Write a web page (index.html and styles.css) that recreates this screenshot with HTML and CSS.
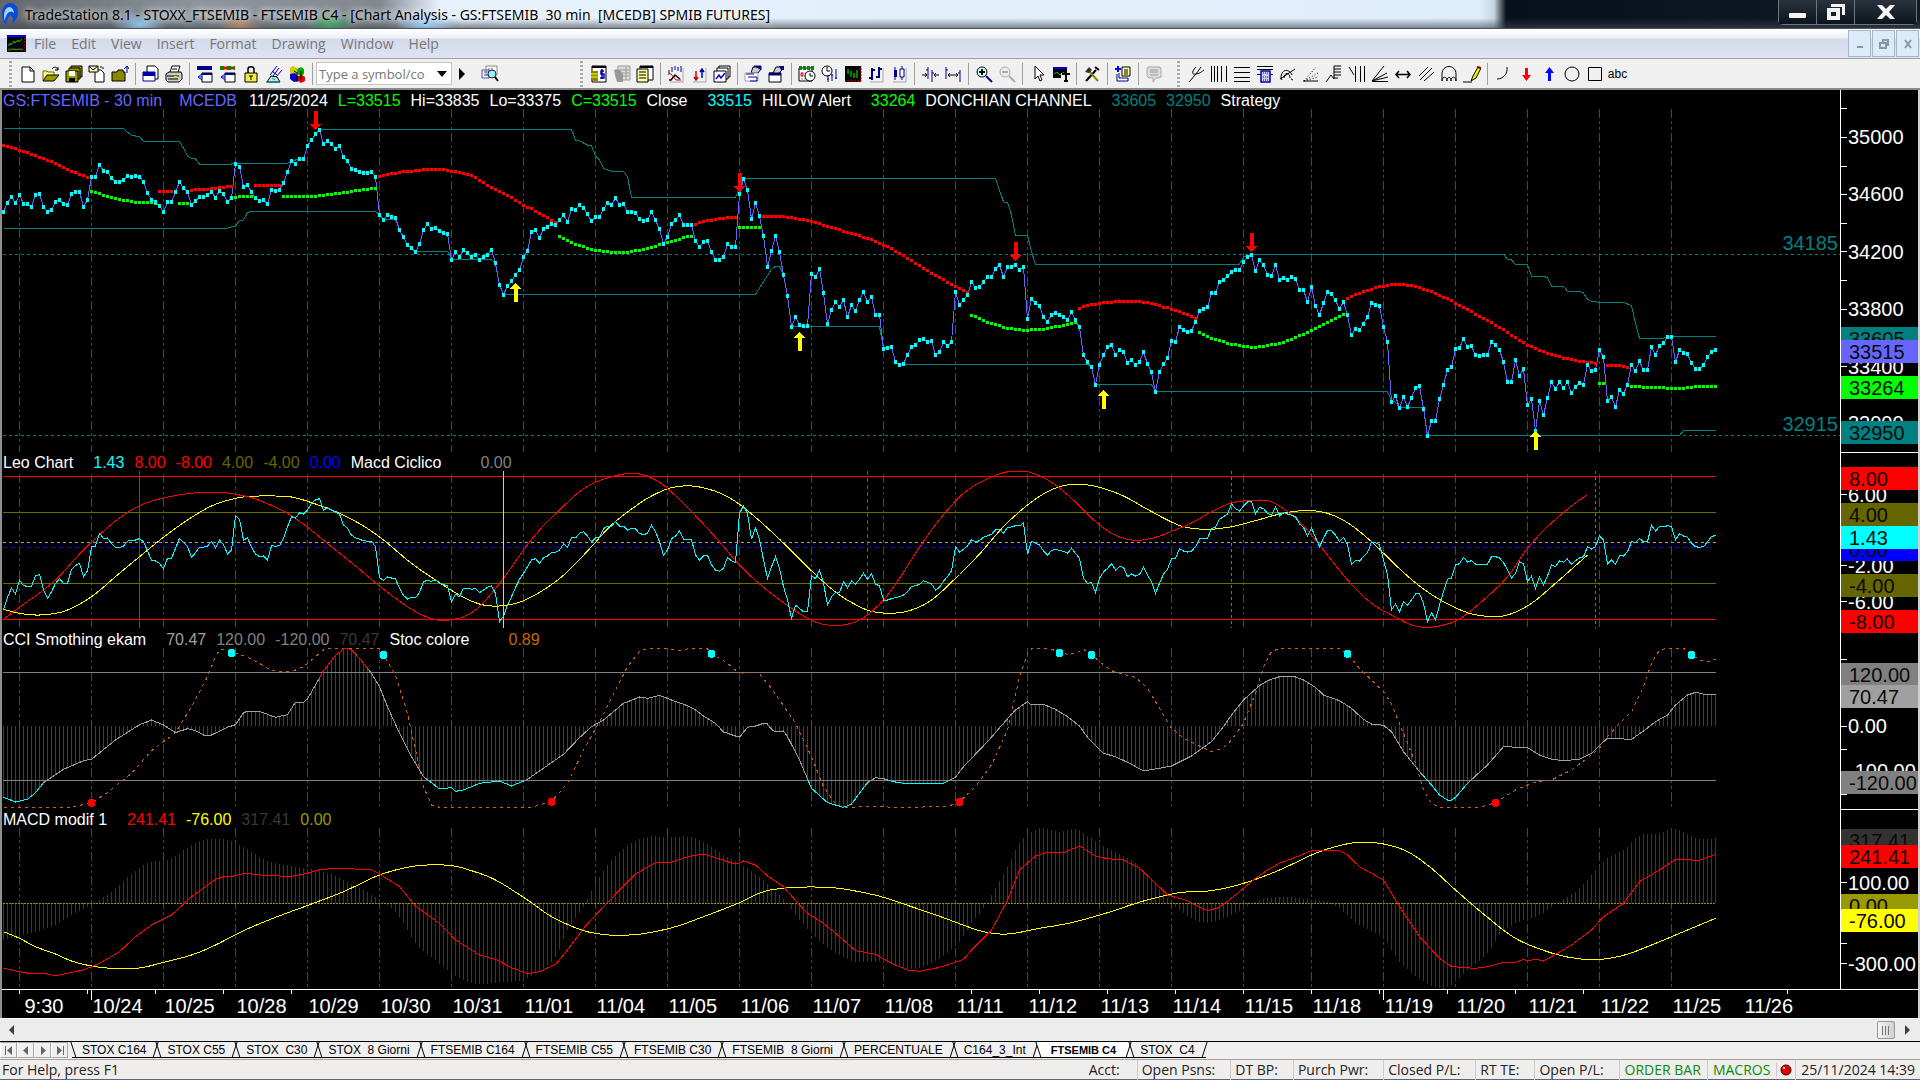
FILE: index.html
```html
<!DOCTYPE html>
<html lang="en">

<head>
    <meta charset="UTF-8">
    <meta name="viewport" content="width=device-width, initial-scale=1.0">
    <title>TradeStation 8.1 - STOXX_FTSEMIB</title>
    <link rel="stylesheet" href="styles.css">
</head>

<body>
    <div class="window">
        <!-- Title bar -->
        <header class="title-bar">
            <svg class="app-icon" viewBox="0 0 18 24">
                <path d="M9 1c5 0 8 4 8 9 0 6-3 9-6 12 1-4 1-7-1-9-3 1-4 5-5 10-3-3-4-7-4-11C1 6 4 1 9 1z" fill="#0a4bd8" />
                <path d="M8 5c3 0 5 3 5 6-2-2-4-2-6 0-2 2-3 5-3 8-2-5-1-13 4-14z" fill="#9fd4ff" />
            </svg>
            <h1 class="title-text">TradeStation 8.1 - STOXX_FTSEMIB - FTSEMIB C4 - [Chart Analysis - GS:FTSEMIB&nbsp; 30 min&nbsp; [MCEDB] SPMIB FUTURES]</h1>
            <div class="window-buttons">
                <button class="win-btn" aria-label="Minimize"><svg width="20" height="16"><rect x="1" y="9" width="17" height="5" rx="1" /></svg></button>
                <button class="win-btn" aria-label="Restore"><svg width="20" height="16"><path d="M5 0h14v11h-3V3H5zM1 4h13v12H1zm4 4v4h5V8z" fill-rule="evenodd" /></svg></button>
                <button class="win-btn win-close" aria-label="Close"><svg width="20" height="16"><path d="M1 1h5l4 4 4-4h5l-6 7 6 7h-5l-4-4-4 4H1l6-7z" /></svg></button>
            </div>
        </header>

        <!-- Menu -->
        <nav class="menu-bar">
            <svg class="doc-icon" viewBox="0 0 19 17">
                <rect width="19" height="17" fill="#000" />
                <rect width="19" height="2" fill="#00f" />
                <path d="M1 11l2-3 1 2 3-4 1 2 3-3 1 2 3-3M1 15h3l2-1 3 1 3-1 4 1" fill="none" stroke="#0c0" />
                <path d="M17.500 3v13M1 13.500h16" stroke="#800" stroke-dasharray="2 1" />
            </svg>
            <button class="menu-item">File</button>
            <button class="menu-item">Edit</button>
            <button class="menu-item">View</button>
            <button class="menu-item">Insert</button>
            <button class="menu-item">Format</button>
            <button class="menu-item">Drawing</button>
            <button class="menu-item">Window</button>
            <button class="menu-item">Help</button>
            <div class="mdi-buttons">
                <button class="mdi-btn" aria-label="Minimize chart"><svg width="10" height="10"><path d="M2 8h6" /></svg></button>
                <button class="mdi-btn" aria-label="Restore chart"><svg width="10" height="10"><path d="M4 3V1h5v5H7M1 4h6v5H1z" /></svg></button>
                <button class="mdi-btn" aria-label="Close chart"><svg width="10" height="10"><path d="M2 1l6 8M8 1L2 9" /></svg></button>
            </div>
        </nav>

        <!-- Toolbar -->
        <div class="toolbar" role="toolbar">
            <div class="tool-group file-tools">
                <span class="grip"></span>
                <button class="tool" aria-label="New"><svg viewBox="0 0 18 18"><path d="M3 2h8l4 4v11H3zM11 2v4h4" fill="#fff" stroke="#000" /></svg></button>
                <button class="tool" aria-label="Open"><svg viewBox="0 0 18 18"><path d="M1 16V6h4l1 1h6v3" fill="#ffff80" stroke="#660" /><path d="M1 16l4-6h12l-5 6z" fill="#990" stroke="#000" /><path d="M10 4c2-3 5-2 6 1m0-3v3h-3" fill="none" stroke="#000" /></svg></button>
                <button class="tool" aria-label="Save all"><svg viewBox="0 0 18 18"><path d="M6 1h11v11H6z" fill="#990" stroke="#000" /><path d="M4 3h11v11H4z" fill="#990" stroke="#000" /><path d="M1 6h12v11H1z" fill="#990" stroke="#000" /><path d="M4 6h6v5H4z" fill="#fff" /><path d="M4 13h6v4H4z" fill="#000" /></svg></button>
                <button class="tool" aria-label="Mail document"><svg viewBox="0 0 18 18"><path d="M7 5h6l3 3v9H7z" fill="#fff" stroke="#000" /><path d="M1 1h9v6H1zM1 1l4 4 5-4" fill="#ffffa0" stroke="#000" /><path d="M12 2h3v3" fill="none" stroke="#000" stroke-dasharray="2 1" /></svg></button>
                <button class="tool" aria-label="Close folder"><svg viewBox="0 0 18 18"><path d="M1 16V7h5l1-2h5v2h2v9z" fill="#880" stroke="#000" /><path d="M16 8V2m-3 2l3-3 2 3" fill="none" stroke="#008" /></svg></button>
                <span class="sep"></span>
                <button class="tool" aria-label="Print preview"><svg viewBox="0 0 18 18"><path d="M5 1h8l3 3v10H5z" fill="#fff" stroke="#000" /><path d="M1 7h12v9H1z" fill="#fff" stroke="#008" /><path d="M1 7h12v4H1z" fill="#00a" /></svg></button>
                <button class="tool" aria-label="Print"><svg viewBox="0 0 18 18"><path d="M5 7l2-6h8l-2 6" fill="#fff" stroke="#000" /><path d="M1 9l3-2h12l1 2v5l-3 3H3l-2-2z" fill="#ccc" stroke="#000" /><path d="M2 11h12M3 14h10M7 4h5" stroke="#000" /><path d="M9 12h3" stroke="#dd0" stroke-width="2" /></svg></button>
                <span class="sep"></span>
                <button class="tool" aria-label="Save desktop"><svg viewBox="0 0 18 18"><path d="M1 2h15M1 4h15" stroke="#008" stroke-width="2" /><path d="M6 8h10v9H6z" fill="#fff" stroke="#000" /><path d="M6 8h10v2H6z" fill="#008" /><path d="M6 12H3M6 9l-4 3 4 3" fill="none" stroke="#00f" /></svg></button>
                <button class="tool" aria-label="Open desktop"><svg viewBox="0 0 18 18"><path d="M1 3h15" stroke="#080" stroke-width="4" stroke-dasharray="4 3" /><path d="M5 3h3m4 0h3" stroke="#f00" stroke-width="3" /><path d="M6 8h10v9H6z" fill="#fff" stroke="#000" /><path d="M6 8h10v2H6z" fill="#008" /><path d="M6 12H3M6 9l-4 3 4 3" fill="none" stroke="#00f" /></svg></button>
                <button class="tool" aria-label="Lock"><svg viewBox="0 0 18 18"><path d="M6 8V4c0-3 6-3 6 0v4" fill="none" stroke="#000" stroke-width="1.500" /><path d="M3 8h12v9H3z" fill="#ee4" stroke="#000" /><path d="M7 11h4M9 11v4" stroke="#000" /></svg></button>
                <button class="tool" aria-label="Data manager"><svg viewBox="0 0 18 18"><path d="M5 10l7-9M8 11l6-8M11 12l6-7M7 6l5 4" stroke="#00a" /><path d="M2 17l4-6 6 1 3 5z" fill="#bee" stroke="#000" /><path d="M1 17h14M7 13l3 2" stroke="#088" /></svg></button>
                <button class="tool" aria-label="Components"><svg viewBox="0 0 18 18"><path d="M2 3l3-2 4 2v5l-3 2-4-2z" fill="#cc0" /><path d="M9 4l4-2 3 2v5l-3 2-4-2z" fill="#0a0" /><path d="M2 9l5-1 3 3v5l-4 1-4-3z" fill="#00c" /><path d="M10 11l4-1 3 2v4l-4 2-3-2z" fill="#d00" /><path d="M6 6l3 2v9M13 6v9" fill="none" stroke="#000" /></svg></button>
                <span class="sep"></span>
                <div class="symbol-box">
                    <input type="text" aria-label="Symbol or command" placeholder="Type a symbol/co">
                    <button class="drop" aria-label="Recent commands"><svg viewBox="0 0 10 6"><path d="M0 0h10L5 6z" /></svg></button>
                </div>
                <button class="tool go" aria-label="Run command"><svg viewBox="0 0 18 18"><path d="M6 3l6 6-6 6z" /></svg></button>
                <button class="tool" aria-label="Symbol lookup"><svg viewBox="0 0 18 18"><path d="M5 1h11v9H5z" fill="#fff" stroke="#888" /><path d="M1 5h7v8H1zM3 7h10M3 10h4M8 3v2m3-2v4" fill="none" stroke="#55a" /><circle cx="11" cy="9" r="4" fill="#9ef" stroke="#222" /><path d="M14 12l3 4" stroke="#000" stroke-width="2" /></svg></button>
            </div>

            <div class="tool-group chart-tools">
                <span class="grip"></span>
                <button class="tool" aria-label="Symbol"><svg viewBox="0 0 18 18"><path d="M2 1h14v16H2z" fill="#fff" stroke="#000" /><path d="M2 2h14" stroke="#000" stroke-width="2" /><path d="M1 6h7v10H1z" fill="#880" /><path d="M1 9h7M1 12h7" stroke="#ff0" /><path d="M14 6h-3v3h3v4h-4M12 4v10" fill="none" stroke="#00a" stroke-width="1.500" /></svg></button>
                <button class="tool" aria-label="Account"><svg viewBox="0 0 18 18"><path d="M5 1h12v14H5z" fill="#ddd" stroke="#999" /><path d="M1 5l5-1 4 5v8H4L2 10z" fill="#999" /><path d="M7 5h9M8 8h8M10 11h6M13 2v13" stroke="#999" /></svg></button>
                <button class="tool" aria-label="Properties"><svg viewBox="0 0 18 18"><path d="M4 1h13v14H4z" fill="#fff" stroke="#000" /><path d="M4 2h13" stroke="#000" stroke-width="2" /><path d="M1 4h11v13H1z" fill="#ffffa0" stroke="#000" /><path d="M3 7h7M3 10h7M3 13h7" stroke="#000" /></svg></button>
                <span class="sep"></span>
                <button class="tool" aria-label="Insert analysis technique"><svg viewBox="0 0 18 18"><path d="M16 3v14H3" fill="none" stroke="#aaa" /><path d="M2 5v4m3-7v5m3-6v4m3-3v4m3-5v6" stroke="#00a" /><path d="M1 9h3l5 6h5" fill="none" stroke="#d00" /><path d="M2 15h2l4-5 5 4" fill="none" stroke="#000" stroke-width="1.500" /></svg></button>
                <button class="tool" aria-label="Insert strategy"><svg viewBox="0 0 18 18"><path d="M16 3v14H3" fill="none" stroke="#aaa" /><path d="M6 6v9m-2-3l2 3 2-3" fill="none" stroke="#c00" stroke-width="1.500" /><path d="M12 13V4m-2 3l2-3 2 3" fill="none" stroke="#00a" stroke-width="1.500" /></svg></button>
                <button class="tool" aria-label="Show charts"><svg viewBox="0 0 18 18"><path d="M6 1h11v11H6z" fill="#fff" stroke="#000" /><path d="M4 3h11v11H4z" fill="#fff" stroke="#000" /><path d="M1 6h12v11H1z" fill="#fff" stroke="#000" /><path d="M3 14l3-4 2 3 4-5" fill="none" stroke="#00c" stroke-width="1.500" /></svg></button>
                <span class="sep"></span>
                <button class="tool" aria-label="Format window"><svg viewBox="0 0 18 18"><path d="M7 8l2-6h5l3 2-3 4z" fill="#ccc" stroke="#000" /><path d="M10 1h7v4" fill="#008" stroke="#008" /><path d="M1 8h13v8H1z" fill="#fff" stroke="#aaa" /><path d="M2 9h8M4 12h9v4H6" fill="none" stroke="#00a" /></svg></button>
                <button class="tool" aria-label="Format symbol"><svg viewBox="0 0 18 18"><path d="M2 8h12v9H2z" fill="#fff" stroke="#000" /><path d="M2 9h12" stroke="#008" stroke-width="3" /><path d="M6 8l3-6h5l2 2-4 4z" fill="#ccc" stroke="#000" /><path d="M12 1h5v4h-3z" fill="#008" /></svg></button>
                <span class="sep"></span>
                <button class="tool" aria-label="Calendar"><svg viewBox="0 0 18 18"><path d="M1 3h13v13H1z" fill="#fff" stroke="#000" /><path d="M1 3h15" stroke="#080" stroke-width="4" stroke-dasharray="3 1" /><path d="M3 8h10M3 11h6M3 14h5" stroke="#888" stroke-dasharray="2 1" /><circle cx="12" cy="11" r="5" fill="#fff" stroke="#000" /><path d="M12 8v3h3" fill="none" stroke="#000" /><path d="M3 8h2v3H3z" fill="none" stroke="#d00" /></svg></button>
                <button class="tool" aria-label="Bar interval"><svg viewBox="0 0 18 18"><circle cx="6" cy="6" r="5" fill="#fff" stroke="#000" /><path d="M6 2v4h3" fill="none" stroke="#000" /><path d="M7 10v7m4-8v7m4-12v10m-9 0h2m2-4h2m2 3h2" stroke="#00a" /></svg></button>
                <button class="tool" aria-label="Bar chart"><svg viewBox="0 0 18 18"><path d="M1 1h16v16H1z" fill="#000" /><path d="M1 16h16V1" fill="none" stroke="#c00" stroke-dasharray="2 1" /><path d="M4 4v5m3-3v6m3-4v5m3-8v8" stroke="#0f0" /></svg></button>
                <button class="tool" aria-label="OHLC bars"><svg viewBox="0 0 18 18"><path d="M16 3v14H3" fill="none" stroke="#aaa" /><path d="M5 3v12m7-13v11M2 13h3m0-8h3m1 7h3m0-8h3" stroke="#008" stroke-width="2" /></svg></button>
                <button class="tool" aria-label="Candlesticks"><svg viewBox="0 0 18 18"><path d="M16 3v14H3" fill="none" stroke="#aaa" /><path d="M5 2v13m7-14v14" stroke="#008" /><path d="M4 5h3v7H4z" fill="#008" /><path d="M10 4h4v8h-4z" fill="#fff" stroke="#008" /></svg></button>
                <span class="sep"></span>
                <button class="tool" aria-label="Decrease spacing"><svg viewBox="0 0 18 18"><path d="M7 2v12m4-9v12M5 5h2m4 3h2" stroke="#008" /><path d="M1 10h5m-2-2l2 2-2 2m14-2h-5m2-2l-2 2 2 2" fill="none" stroke="#000" /></svg></button>
                <button class="tool" aria-label="Increase spacing"><svg viewBox="0 0 18 18"><path d="M2 2v12M16 5v12M2 5h2m10 3h2" stroke="#008" /><path d="M4 10h10m-8-2l-2 2 2 2m6-4l2 2-2 2" fill="none" stroke="#000" /></svg></button>
                <span class="sep"></span>
                <button class="tool" aria-label="Zoom in"><svg viewBox="0 0 18 18"><circle cx="7" cy="7" r="5" fill="#cff" stroke="#000" /><path d="M7 4v6M4 7h6" stroke="#000" stroke-width="2" /><path d="M11 11l6 6" stroke="#008" stroke-width="2" /></svg></button>
                <button class="tool" aria-label="Zoom out"><svg viewBox="0 0 18 18"><circle cx="7" cy="7" r="5" fill="#eee" stroke="#aaa" /><path d="M4 7h6" stroke="#aaa" stroke-width="2" /><path d="M11 11l6 6" stroke="#aaa" stroke-width="2" /></svg></button>
                <span class="sep"></span>
                <button class="tool" aria-label="Pointer"><svg viewBox="0 0 18 18"><path d="M6 1v13l3-3 2 5 2-1-2-5h4z" fill="#fff" stroke="#000" /></svg></button>
                <button class="tool" aria-label="Data tip"><svg viewBox="0 0 18 18"><path d="M1 2h14v11H1z" fill="#000" /><path d="M1 2h14v2H1z" fill="#00c" /><path d="M2 9l3-2 3 3 4-3" fill="none" stroke="#0c0" /><path d="M9 8h9v9H9z" fill="#f0f0f0" /><path d="M10 9h8M14 9v8M12 16h4" stroke="#000" stroke-width="2" /></svg></button>
                <span class="sep"></span>
                <button class="tool" aria-label="Customize"><svg viewBox="0 0 18 18"><path d="M3 16L13 5M12 2l4 3" stroke="#000" stroke-width="2" /><path d="M6 6l9 10" stroke="#880" stroke-width="2" /><path d="M2 7l4-5 3 3-3 3z" fill="#333" /></svg></button>
                <span class="sep"></span>
                <button class="tool" aria-label="Add to workspace"><svg viewBox="0 0 18 18"><path d="M4 1v6M1 4h6" stroke="#00f" stroke-width="2" /><path d="M8 2h8v9H8z" fill="#ffffa0" stroke="#000" /><path d="M10 5h4m-4 2h4m-4 2h4" stroke="#000" /><path d="M5 8v5h9v3H3V9" fill="#fff" stroke="#008" /></svg></button>
                <span class="sep"></span>
                <button class="tool" aria-label="Comment"><svg viewBox="0 0 18 18"><path d="M3 2h12l1 2v8l-3 1h-2l-3 4v-4H4l-2-2V4z" fill="#ddd" stroke="#aaa" /><path d="M5 5h8M5 7h8M5 10h8" stroke="#999" /></svg></button>
            </div>

            <div class="tool-group draw-tools">
                <span class="grip"></span>
                <button class="tool" aria-label="Pitchfork"><svg viewBox="0 0 18 18"><path d="M2 17l7-8M9 2c-4 4-5 8 0 7s5-2 8-4M9 9l5-7" fill="none" stroke="#000" /></svg></button>
                <button class="tool" aria-label="Time cycles"><svg viewBox="0 0 18 18"><path d="M1.500 1v16m3-16v16m3-16v16m4-16v16m5-16v16" stroke="#000" /></svg></button>
                <button class="tool" aria-label="Parallel levels"><svg viewBox="0 0 18 18"><path d="M1 2.500h16M1 7.500h16M1 12.500h16M1 16.500h16" stroke="#000" /></svg></button>
                <button class="tool" aria-label="Price calculator"><svg viewBox="0 0 18 18"><path d="M1 1.500h16M1 4.500h16M1 9.500h16" stroke="#000" /><path d="M5 6h9v11H5z" fill="#cce" stroke="#00a" stroke-width="1.500" /><path d="M7 8h5M7 12h5M7 15h5" stroke="#00a" stroke-dasharray="1 1" /></svg></button>
                <button class="tool" aria-label="Speed arcs"><svg viewBox="0 0 18 18"><path d="M1 14L16 4M2 13C2 4 10 3 13 10M5 13c0-6 6-6 6 0M2 13l1 2m9-1l2 1" fill="none" stroke="#000" /></svg></button>
                <button class="tool" aria-label="Fan lines"><svg viewBox="0 0 18 18"><path d="M1 16h15" stroke="#000" /><path d="M2 16L14 2M2 16l14-8M2 16l14-4" stroke="#000" stroke-dasharray="1 2" /></svg></button>
                <button class="tool" aria-label="Retracement levels"><svg viewBox="0 0 18 18"><path d="M1 17l5-7 3 4V1h7M9 4h7M9 7h7M9 10h7M9 13h4" fill="none" stroke="#000" /></svg></button>
                <button class="tool" aria-label="Time zones"><svg viewBox="0 0 18 18"><path d="M1 2l5 8M7.500 1v16M12.500 1v16M16.500 1v16" fill="none" stroke="#000" /></svg></button>
                <button class="tool" aria-label="Gann fan"><svg viewBox="0 0 18 18"><path d="M1 16.500h16M1 16L13 1M1 16l15-8M1 16l16-4" stroke="#000" /></svg></button>
                <button class="tool" aria-label="Horizontal line"><svg viewBox="0 0 18 18"><path d="M2 9.500h14M5 6L2 9.500 5 13m8-7l3 3.500-3 3.500" fill="none" stroke="#000" stroke-width="1.500" /></svg></button>
                <button class="tool" aria-label="Parallel lines"><svg viewBox="0 0 18 18"><path d="M2 11l9-9M3 15L15 3M7 16l10-9" stroke="#000" /></svg></button>
                <button class="tool" aria-label="Cycle arcs"><svg viewBox="0 0 18 18"><path d="M2 16V9c0-10 14-10 14 0v7M2 16c0-5 5-5 5 0 0-5 4-5 4 0 0-5 5-5 5 0" fill="none" stroke="#000" /></svg></button>
                <button class="tool" aria-label="Pencil"><svg viewBox="0 0 18 18"><path d="M0 17h9" stroke="#000" /><path d="M8 16l2-5 5-9 3 1-5 10z" fill="#ee0" stroke="#000" /><path d="M14 2l4 1" stroke="#800" stroke-width="2" /></svg></button>
                <span class="sep"></span>
                <button class="tool" aria-label="Arc"><svg viewBox="0 0 18 18"><path d="M3 14c6 0 11-5 10-12" fill="none" stroke="#000" /></svg></button>
                <button class="tool" aria-label="Down arrow"><svg viewBox="0 0 18 18"><path d="M8 3h3v7h3l-4.500 6L5 10h3z" fill="#f00" /></svg></button>
                <button class="tool" aria-label="Up arrow"><svg viewBox="0 0 18 18"><path d="M8 16h3V8h3L9.500 2 5 8h3z" fill="#00f" /></svg></button>
                <button class="tool" aria-label="Ellipse"><svg viewBox="0 0 18 18"><circle cx="9" cy="9" r="7" fill="none" stroke="#000" /></svg></button>
                <button class="tool" aria-label="Rectangle"><svg viewBox="0 0 18 18"><path d="M2.500 2.500h13v13h-13z" fill="none" stroke="#000" /></svg></button>
                <button class="tool text-tool" aria-label="Text">abc</button>
            </div>
        </div>

        <!-- Charts -->
        <main class="charts">
            <section class="panel price-panel">
                <div class="plot">
                    <div class="legend">
                        <span class="c-violet symbol">GS:FTSEMIB - 30 min</span><span class="c-violet source">MCEDB</span>
                        <span>11/25/2024</span><span class="c-green">L=33515</span><span>Hi=33835</span><span>Lo=33375</span>
                        <span class="c-green">C=33515</span><span class="study">Close</span><span class="c-cyan">33515</span>
                        <span class="study">HILOW Alert</span><span class="c-green">33264</span><span class="study">DONCHIAN CHANNEL</span>
                        <span class="c-teal">33605</span><span class="c-teal">32950</span><span>Strategy</span>
                    </div>
                    <svg class="canvas" id="price"></svg>
                </div>
                <svg class="scale" id="priceScale"></svg>
            </section>

            <section class="panel leo-panel">
                <div class="plot">
                    <div class="legend">
                        <span class="study">Leo Chart</span><span class="c-cyan">1.43</span><span class="c-red">8.00</span>
                        <span class="c-red">-8.00</span><span class="c-olive">4.00</span><span class="c-olive">-4.00</span>
                        <span class="c-blue">0.00</span><span class="study last">Macd Ciclico</span><span class="c-gray">0.00</span>
                    </div>
                    <svg class="canvas" id="leo"></svg>
                </div>
                <svg class="scale" id="leoScale"></svg>
            </section>

            <section class="panel cci-panel">
                <div class="plot">
                    <div class="legend">
                        <span class="study">CCI Smothing ekam</span><span class="c-silver">70.47</span><span class="c-gray">120.00</span>
                        <span class="c-gray">-120.00</span><span class="c-dark">70.47</span><span class="study last">Stoc colore</span>
                        <span class="c-orange">0.89</span>
                    </div>
                    <svg class="canvas" id="cci"></svg>
                </div>
                <svg class="scale" id="cciScale"></svg>
            </section>

            <section class="panel macd-panel">
                <div class="plot">
                    <div class="legend">
                        <span class="study">MACD modif 1</span><span class="c-red">241.41</span><span class="c-yellow">-76.00</span>
                        <span class="c-dark">317.41</span><span class="c-mustard">0.00</span>
                    </div>
                    <svg class="canvas" id="macd"></svg>
                </div>
                <svg class="scale" id="macdScale"></svg>
            </section>

            <svg class="time-axis" id="timeAxis"></svg>
        </main>

        <!-- Scroll bar -->
        <div class="scroll-bar">
            <button class="scroll-arrow" aria-label="Scroll left"><svg width="6" height="10"><path d="M6 0v10L1 5z" /></svg></button>
            <span class="scroll-track"></span>
            <button class="scroll-thumb" aria-label="Scroll position"></button>
            <button class="scroll-arrow" aria-label="Scroll right"><svg width="6" height="10"><path d="M0 0v10l5-5z" /></svg></button>
        </div>

        <!-- Workspaces -->
        <nav class="tabs">
            <div class="tab-nav">
                <button aria-label="First"><svg width="10" height="9"><path d="M1 0h1v9H1zM8 0v9L3 4.500z" /></svg></button>
                <button aria-label="Previous"><svg width="10" height="9"><path d="M7 0v9L2 4.500z" /></svg></button>
                <button aria-label="Next"><svg width="10" height="9"><path d="M3 0v9l5-4.500z" /></svg></button>
                <button aria-label="Last"><svg width="10" height="9"><path d="M8 0h1v9H8zM2 0v9l5-4.500z" /></svg></button>
            </div>
            <button class="tab">STOX C164</button>
            <button class="tab">STOX C55</button>
            <button class="tab">STOX  C30</button>
            <button class="tab">STOX  8 Giorni</button>
            <button class="tab">FTSEMIB C164</button>
            <button class="tab">FTSEMIB C55</button>
            <button class="tab">FTSEMIB C30</button>
            <button class="tab">FTSEMIB  8 Giorni</button>
            <button class="tab">PERCENTUALE</button>
            <button class="tab">C164_3_Int</button>
            <button class="tab active">FTSEMIB C4</button>
            <button class="tab">STOX  C4</button>
        </nav>

        <!-- Status bar -->
        <footer class="status-bar">
            <span class="status-help">For Help, press F1</span>
            <span class="cell">Acct:</span>
            <span class="cell">Open Psns:</span>
            <span class="cell">DT BP:</span>
            <span class="cell">Purch Pwr:</span>
            <span class="cell">Closed P/L:</span>
            <span class="cell">RT TE:</span>
            <span class="cell">Open P/L:</span>
            <span class="cell on">ORDER BAR</span>
            <span class="cell on">MACROS</span>
            <span class="cell lamp"><svg width="12" height="14"><circle cx="6" cy="7" r="5" fill="#d00" stroke="#400" /><circle cx="4" cy="5" r="1" fill="#fff" /></svg></span>
            <span class="cell">25/11/2024 14:39</span>
        </footer>
    </div>

    <script src="chart.js"></script>
</body>

</html>
```
FILE: styles.css
```css
* {
    margin: 0;
    padding: 0;
    box-sizing: border-box;
}

body {
    background: #f0f0f0;
    font-family: "Liberation Sans", Arial, sans-serif;
    overflow: hidden;
}

button {
    border: none;
    background: none;
    font: inherit;
    color: inherit;
}

.window {
    display: flex;
    flex-direction: column;
    min-height: 100vh;
}

/* title bar */
.title-bar {
    display: flex;
    align-items: center;
    height: 29px;
    padding-left: 1px;
    border-bottom: 1px solid #50545a;
    background:
        radial-gradient(ellipse 28px 12px at 140px 24px, #8fc4ee, transparent),
        radial-gradient(ellipse 24px 10px at 240px 25px, #b08060, transparent),
        radial-gradient(ellipse 26px 12px at 330px 24px, #3fa060, transparent),
        radial-gradient(ellipse 30px 12px at 425px 24px, #8fc8f4, transparent),
        linear-gradient(to bottom, transparent 18px, rgba(60, 70, 80, 0.6) 28px),
        linear-gradient(to right, #63676c 0, #8e959d 200px, #83888f 380px, #c3ccd6 418px, #e6f1fb 440px, #dfeefb 1480px, #c5d6e2 1494px, #08111b 1506px, #101a24 100%);
}

.app-icon {
    width: 18px;
    height: 24px;
}

.title-text {
    flex: 1;
    margin-left: 6px;
    font: 14px "Noto Sans", sans-serif;
    color: #000;
    text-shadow: 0 0 6px #fff, 0 0 8px rgba(255, 255, 255, 0.6);
    white-space: nowrap;
}

.window-buttons {
    display: flex;
    align-self: flex-start;
    margin-right: 3px;
    border: 1px solid #6c7680;
    border-top: none;
    border-radius: 0 0 5px 5px;
}

.win-btn {
    display: flex;
    align-items: center;
    justify-content: center;
    width: 38px;
    height: 24px;
    border-right: 1px solid #6c7680;
    background: linear-gradient(#2a333d, #0c141d);
}

.win-btn svg {
    fill: #f4f4f4;
}

.win-close {
    width: 61px;
    border-right: none;
}

/* menu */
.menu-bar {
    display: flex;
    align-items: center;
    gap: 1px;
    height: 29px;
    padding-left: 7px;
    background: linear-gradient(#fff, #eef0f8 9px, #d4daeb 10px, #dfe3f3);
    font: 14px "Open Sans", sans-serif;
    color: #777;
}

.doc-icon {
    width: 19px;
    height: 17px;
}

.menu-item {
    padding: 0 7px;
}

.mdi-buttons {
    display: flex;
    gap: 1px;
    margin-left: auto;
    margin-right: 1px;
}

.mdi-btn {
    width: 23px;
    height: 27px;
    border: 1px solid #a9b6c8;
    background: #dcebf9;
}

.mdi-btn svg {
    fill: none;
    stroke: #8a97a8;
    stroke-width: 2;
}

/* toolbar */
.toolbar {
    display: flex;
    height: 32px;
    border-top: 1px solid #a0a0a0;
    border-bottom: 2px solid #8a8a8a;
    background: #f0f0f0;
}

.tool-group {
    display: flex;
    align-items: center;
    padding-left: 9px;
}

.file-tools {
    flex: 0 0 571px;
}

.chart-tools {
    flex: 0 0 597px;
}

.grip {
    width: 3px;
    height: 26px;
    margin-right: 4px;
    background: repeating-linear-gradient(#aaa 0 2px, transparent 2px 4px);
}

.tool {
    display: flex;
    align-items: center;
    justify-content: center;
    flex: 0 0 23px;
    height: 24px;
}

.tool svg {
    width: 18px;
    height: 18px;
}

.sep {
    flex: 0 0 8px;
    height: 22px;
    background: linear-gradient(#a0a0a0, #a0a0a0) center / 1px 100% no-repeat;
}

.symbol-box {
    display: flex;
    align-items: center;
    width: 136px;
    height: 23px;
    border: 1px solid #c4c4c4;
    background: #fff;
}

.symbol-box input {
    flex: 1;
    min-width: 0;
    padding-left: 2px;
    border: none;
    background: none;
    font: 13px "Open Sans", sans-serif;
}

.symbol-box input::placeholder {
    color: #777;
}

.drop {
    width: 19px;
    line-height: 0;
}

.drop svg {
    width: 10px;
    height: 6px;
}

.go {
    flex-basis: 20px;
    margin-right: 6px;
}

.text-tool {
    font-size: 12px;
}

/* charts */
.charts {
    border-left: 2px solid #909090;
    border-right: 2px solid #d0d0d0;
    background: #000;
    color: #fff;
}

.panel {
    display: grid;
    grid-template-columns: 1fr 78px;
}

.plot {
    min-width: 0;
}

.legend {
    display: flex;
    gap: 10px;
    height: 20px;
    padding-left: 1px;
    font-size: 16px;
    line-height: 22px;
    white-space: nowrap;
}

.symbol {
    margin-right: 7px;
}

.source {
    margin-right: 2px;
}

.study {
    margin-right: 10px;
}

.study.last {
    margin-right: 29px;
}

.canvas,
.scale,
.time-axis {
    display: block;
    width: 100%;
    overflow: visible;
    shape-rendering: crispEdges;
}

.scale {
    height: 100%;
    border-left: 1px solid #fff;
}

.panel + .panel .scale {
    border-top: 1px solid #fff;
}

/* the lowest tag hangs over into the next panel */
.leo-panel .scale {
    position: relative;
    z-index: 1;
}

.price-panel .canvas {
    height: 342px;
}

.leo-panel .canvas {
    height: 157px;
}

.cci-panel .canvas,
.macd-panel .canvas {
    height: 160px;
}

.time-axis {
    height: 29px;
    border-top: 1px solid #fff;
}

.axis-text {
    font-size: 20px;
    fill: #fff;
}

.axis-text.dark {
    fill: #0a0a0a;
}

.axis-text.teal {
    fill: #008080;
}

.line {
    fill: none;
    stroke-width: 1;
}

.grid-line {
    stroke: #464646;
    stroke-dasharray: 9 3 3 3 3 3;
}

.c-violet { color: #6666ff; }
.c-green { color: #00ff00; }
.c-cyan { color: #00ffff; }
.c-teal { color: #008080; }
.c-red { color: #ff0000; }
.c-olive { color: #666600; }
.c-mustard { color: #999900; }
.c-blue { color: #0000ff; }
.c-gray { color: #808080; }
.c-silver { color: #a0a0a0; }
.c-dark { color: #383838; }
.c-orange { color: #cc6600; }
.c-yellow { color: #ffff00; }

/* scroll bar */
.scroll-bar {
    display: flex;
    align-items: center;
    height: 23px;
    padding: 0 4px 0 2px;
    border-top: 1px solid #fff;
    background: #ececec;
}

.scroll-arrow {
    width: 17px;
    fill: #404040;
    line-height: 0;
}

.scroll-track {
    flex: 1;
}

.scroll-thumb {
    width: 18px;
    height: 18px;
    margin-right: 4px;
    border: 1px solid #999;
    border-radius: 2px;
    background: repeating-linear-gradient(to right, #777 0 1px, transparent 1px 3px) center / 9px 9px no-repeat, linear-gradient(to right, #f4f4f4, #d0d0d0);
}

/* workspace tabs */
.tabs {
    display: flex;
    height: 18px;
    border-top: 1px solid #000;
    background: #f0f0f0;
    font-size: 12px;
    color: #000;
}

.tab-nav {
    display: flex;
    margin-right: 4px;
}

.tab-nav button {
    width: 17px;
    height: 16px;
    border: 1px solid #a8a8a8;
    border-left-color: #fff;
    line-height: 0;
    fill: #666;
}

.tab {
    position: relative;
    height: 16px;
    padding: 0 11px 0 10px;
    border-bottom: 1px solid #000;
    line-height: 16px;
    white-space: pre;
}

.tab::before,
.tab::after {
    content: "";
    position: absolute;
    top: 0;
    width: 1px;
    height: 16px;
    background: #000;
}

.tab::before {
    left: 1px;
    transform: skewX(18deg);
}

.tab::after {
    right: 1px;
    transform: skewX(-18deg);
}

.tab.active {
    padding: 0 14px;
    background: #fff;
    font-weight: bold;
    font-size: 11px;
}

/* status bar */
.status-bar {
    display: flex;
    align-items: center;
    flex: 1;
    max-height: 21px;
    border-top: 1px solid #a0a0a0;
    border-bottom: 1px solid #5a6478;
    background: #f0eded;
    font: 14px/20px "Open Sans", sans-serif;
    color: #222;
}

.status-help {
    flex: 1;
    padding-left: 2px;
}

.cell {
    padding: 0 15px 0 4px;
    border-left: 1px solid #cfcccc;
    white-space: nowrap;
}

.status-help + .cell {
    border-left: none;
    padding-right: 17px;
}

.cell.on {
    padding: 0 6px 0 5px;
    color: #0a8a0a;
}

.cell.lamp {
    padding: 0 3px;
    line-height: 0;
}

.cell:last-child {
    padding: 0 5px;
}
```
FILE: chart.js
```js
const NS = 'http://www.w3.org/2000/svg';
const BARS = 429;

// close of every 30 minute bar, in thirds of a pixel from the top of the panel
const close = [
    306,278,261,279,254,282,282,291,254,252,291,306,300,275,269,282,285,251,246,245,
    291,270,201,201,164,183,186,204,216,216,210,197,200,197,200,215,250,269,276,288,
    306,276,276,246,215,234,246,285,273,261,261,256,245,264,242,252,276,264,161,170,
    231,225,246,264,272,269,282,240,243,240,219,185,153,162,147,147,107,90,72,60,
    101,92,101,117,107,140,153,177,180,186,188,188,185,201,315,330,315,320,324,360,
    381,405,414,426,402,360,342,357,354,363,369,372,450,426,441,419,428,441,434,450,
    441,435,419,459,525,555,528,513,495,480,440,423,366,360,384,357,351,342,345,330,
    314,336,296,300,285,294,312,333,321,321,297,279,285,263,285,281,306,306,309,327,
    332,330,306,330,357,402,381,342,330,315,345,345,345,393,411,396,393,426,450,450,
    441,402,411,411,252,207,240,327,279,318,378,471,423,378,426,495,558,651,621,645,
    648,648,491,501,477,549,642,600,576,591,570,621,585,603,570,546,576,561,615,615,
    717,714,711,756,765,762,735,711,705,690,687,696,693,735,726,696,708,696,546,585,
    570,555,516,534,531,516,501,501,477,465,501,471,471,465,480,471,627,567,579,588,
    621,636,615,609,615,621,630,606,630,651,735,756,771,825,765,735,711,705,735,720,
    726,759,750,765,756,726,762,786,846,786,762,744,692,696,651,660,666,663,636,603,
    597,591,549,549,516,510,498,486,480,480,456,441,435,483,450,465,495,498,465,510,
    504,510,501,507,540,540,576,531,588,615,579,546,552,570,597,576,615,675,657,660,
    642,621,579,585,588,651,696,876,858,894,861,891,864,834,828,897,978,933,933,867,
    825,780,771,717,714,687,711,708,735,738,735,735,696,705,720,756,816,816,750,798,
    777,885,867,962,873,915,864,816,837,816,834,816,849,831,819,825,765,783,780,720,
    741,873,861,891,840,852,825,765,783,753,780,780,711,735,708,699,681,681,756,720,
    729,732,759,777,777,765,741,726,720
];

// the leo oscillator, one value a bar
const leo = [
    480,442,414,432,391,407,409,409,378,373,420,445,425,400,386,400,400,358,347,340,
    380,362,290,288,250,265,264,281,293,293,288,274,270,270,266,275,303,330,333,340,
    356,325,325,295,265,278,289,322,308,292,292,288,274,293,270,284,312,300,197,208,
    270,264,292,312,320,318,330,287,289,287,265,230,200,204,188,192,180,160,150,146,
    180,174,180,187,192,225,235,256,263,268,272,274,274,290,383,391,381,384,387,415,
    436,447,442,443,428,395,391,394,390,400,403,408,457,433,440,414,414,418,415,428,
    420,412,408,430,515,498,465,440,413,388,370,350,330,326,340,323,318,308,307,300,
    282,292,263,264,250,245,258,276,264,262,236,228,228,215,228,228,240,235,237,250,
    254,250,226,245,275,316,300,266,258,243,268,270,269,315,331,318,316,345,360,364,
    355,322,332,338,190,167,190,268,234,268,330,385,350,320,355,410,450,505,466,475,
    486,485,378,386,360,400,465,440,428,428,395,414,393,402,388,370,388,371,402,408,
    450,450,446,443,440,435,425,410,407,403,392,397,402,420,412,393,380,362,290,306,
    298,288,269,276,272,262,257,253,240,238,250,232,231,227,228,218,313,274,280,285,
    303,316,301,298,301,304,310,295,310,325,385,400,398,427,385,366,355,341,360,350,
    352,380,372,378,373,352,376,395,430,400,372,358,327,325,296,303,306,303,290,267,
    265,265,235,232,208,200,192,162,176,183,168,156,154,192,172,176,190,196,170,198,
    187,192,196,200,222,232,258,234,262,290,265,242,242,255,275,262,283,342,332,333,
    320,308,276,278,284,330,375,480,462,485,455,466,450,432,431,460,515,488,510,465,
    425,388,384,345,341,322,336,332,342,345,343,343,320,320,324,338,360,384,370,335,
    342,395,378,415,380,405,378,345,350,332,337,327,343,332,324,320,290,297,290,257,
    270,343,330,343,317,318,305,275,278,265,276,275,226,243,230,231,227,230,270,251,
    258,262,280,290,292,290,275,260,256
];

// HILOW stops: runs of "bar,level" points
const stopsRed = [
    '0,105 4,120 8,137 13,160 17,183 21,201',
    '39,243 42,243',
    '47,240 50,239 57,228',
    '63,225 69,225',
    '94,198 98,189 102,183 107,178 110,178 112,183 117,197 122,233 128,270 130,285 133,303 138,338',
    '173,342 177,330 180,324 183,321',
    '190,318 194,319 199,327 205,345 210,363 215,381 220,405 224,430 231,482 236,516 241,548',
    '269,594 273,582 277,576 281,573 285,576 290,591 292,597 295,609 298,624',
    '336,564 339,549 342,537 345,528 348,524 351,525 355,537 360,561 363,579 368,612 373,645 377,675 381,705 386,729 390,744 394,753 398,759',
    '401,765 404,767 406,771'
];
const stopsGreen = [
    '22,243 26,260 30,270 34,278 38,279',
    '44,279 46,279',
    '58,261 62,258',
    '70,258 78,258 82,252 86,246 90,239 93,234',
    '139,380 142,398 146,414 150,425 153,426 156,426 160,418 163,408 166,398 169,387 172,378',
    '184,351 189,351',
    '242,615 246,636 251,654 255,660 260,657 264,648 268,636',
    '299,666 302,684 307,702 312,711 315,709 320,696 325,672 330,642 335,612',
    '399,819 400,819',
    '407,828 411,833 416,834 420,834 424,830 428,828'
];

const donchianHigh = '0,55 30,55 31,67 32,76 34,80 35,94 44,94 45,115 46,138 47,145 48,147 49,162 57,162 58,160 71,160 73,150 75,147 76,107 79,58 142,58 143,91 144,92 145,99 146,105 147,108 148,138 149,150 150,175 152,184 155,184 156,200 157,262 183,262 185,205 248,205 250,276 251,277 252,315 253,376 256,376 257,425 258,463 309,463 310,441 312,433 375,433 376,448 377,450 378,463 381,463 382,499 385,499 386,503 387,529 390,529 391,544 394,544 395,549 396,568 397,574 399,577 405,577 406,582 407,587 408,640 409,685 415,685 416,680 428,680';
const donchianLow = '0,355 56,355 57,350 58,349 59,331 60,330 61,308 62,304 93,304 94,315 95,328 98,328 99,360 101,405 103,424 111,424 112,448 122,448 123,462 124,525 125,553 188,553 190,515 192,478 193,469 194,469 195,495 196,558 197,650 219,650 220,715 222,711 223,756 224,763 271,763 272,771 273,824 287,824 288,845 346,845 347,872 348,877 349,892 355,892 356,976 419,976 420,962 428,962';

const leoRed = '0,508 5,463 10,420 14,378 18,325 22,277 28,213 34,167 40,144 46,131 50,127 54,127 58,133 62,143 66,161 71,190 76,232 82,290 88,348 94,408 98,445 102,478 106,502 109,511 112,509 115,500 119,470 125,385 130,300 134,240 139,180 144,125 148,97 153,77 157,70 160,75 163,90 166,115 172,185 178,262 184,345 190,412 197,475 202,511 206,525 210,525 213,515 216,495 220,450 224,385 228,310 232,240 236,180 240,130 245,92 250,68 254,63 257,68 262,97 267,145 273,215 278,256 283,271 288,262 292,244 297,219 302,185 307,159 312,151 316,152 319,168 324,215 328,270 336,390 342,460 347,495 352,525 356,532 360,525 364,507 370,450 376,380 381,295 386,230 392,168 396,134';
const leoYellow = '0,478 4,490 8,495 12,492 16,480 22,440 28,380 34,320 40,262 46,210 52,168 58,145 62,139 68,138 72,141 77,158 84,190 90,228 95,270 102,340 109,398 115,442 120,465 125,467 130,452 136,412 141,365 147,290 152,225 159,160 163,132 167,113 172,108 177,120 181,140 185,172 192,245 198,315 204,385 209,435 214,470 217,484 222,490 227,480 232,450 238,385 244,312 250,230 256,165 261,125 265,107 269,103 274,112 280,138 286,178 291,210 295,230 301,238 307,230 313,212 319,192 323,184 327,182 331,190 336,218 342,275 348,345 354,408 360,455 366,488 371,499 376,495 382,460 388,400 396,315';

const cci = '0,1042 3,1056 6,1048 8,1028 10,998 15,958 20,932 22,928 28,870 34,824 37,810 40,825 43,848 46,836 48,842 50,855 52,855 56,832 58,824 60,788 61,784 64,784 68,802 71,794 73,757 75,757 76,747 78,705 80,662 83,616 85,597 86,595 87,600 89,625 92,670 94,710 96,770 99,850 102,920 105,980 109,1017 112,1013 113,1024 115,1020 119,1000 124,993 127,1008 131,988 135,955 140,913 144,863 147,830 150,810 155,760 159,741 161,745 164,736 167,750 171,767 173,780 175,798 178,820 180,846 184,862 186,832 188,828 190,820 191,822 192,838 193,846 195,843 196,860 199,930 202,1015 206,1058 210,1072 212,1062 214,1030 216,998 218,983 220,986 222,994 226,1002 230,1000 235,1000 238,982 240,950 246,875 250,820 253,780 256,755 257,765 260,763 263,778 266,800 269,828 271,862 275,910 278,920 282,943 285,963 289,955 292,948 297,918 302,875 305,830 307,795 310,750 314,707 316,692 319,680 323,681 325,690 328,712 330,735 334,752 337,775 340,808 342,822 345,826 347,845 350,905 354,965 357,1005 359,1035 361,1050 362,1050 363,1042 366,1000 371,945 375,890 381,893 384,915 387,928 390,932 394,928 397,910 400,875 401,865 407,868 410,843 413,815 416,795 418,765 421,735 423,727 426,735 428,733';
const stoch = '0,1072 17,1072 22,1058 26,1028 32,970 37,902 43,848 47,770 51,680 53,620 54,600 55,598 57,606 61,622 64,640 67,662 72,665 75,650 78,620 80,600 82,595 94,595 95,615 98,675 101,790 103,900 105,1010 107,1065 109,1072 132,1072 137,1055 141,1000 145,900 149,815 153,720 156,650 159,605 160,598 162,595 166,597 169,601 172,595 176,597 177,611 181,640 183,660 185,671 187,665 189,672 192,715 198,820 202,920 205,1010 208,1062 210,1072 218,1070 224,1072 236,1070 239,1055 243,1010 247,945 251,840 254,680 256,612 257,596 261,595 264,605 266,614 268,610 270,598 272,614 275,645 277,662 280,673 283,682 286,715 289,775 292,835 295,865 299,888 302,905 305,893 307,870 310,820 313,730 315,650 317,605 319,595 334,595 336,611 339,655 342,690 345,725 347,762 350,850 353,940 355,1020 357,1060 359,1072 369,1072 373,1058 378,1020 382,1000 387,990 392,960 397,915 399,895 401,860 404,820 407,785 410,710 412,640 414,600 416,595 420,595 422,614 424,630 426,635 428,628';

const macdHist = '0,420 5,405 13,375 17,345 22,313 27,275 31,232 36,190 42,175 47,135 51,117 55,118 58,128 62,155 66,182 73,200 79,212 83,228 89,265 95,305 99,350 103,430 108,480 112,520 116,545 120,552 125,545 129,542 134,512 138,470 141,390 145,320 148,250 152,180 157,130 161,110 166,112 171,110 175,125 180,165 184,190 189,230 193,275 196,310 198,345 203,410 207,450 213,485 220,485 226,507 232,490 239,425 242,370 245,325 248,265 251,200 254,130 257,95 260,84 264,95 268,86 272,115 276,145 282,180 286,225 290,280 293,320 297,355 301,368 305,355 310,325 313,305 319,290 326,298 331,306 334,325 339,375 345,415 349,485 354,535 358,562 361,562 366,510 371,460 374,405 378,370 384,345 388,312 394,265 398,210 401,175 405,150 409,107 414,100 417,87 420,95 424,117 428,115';
const macdRed = '0,505 4,515 7,522 10,520 13,527 16,520 20,510 24,490 29,455 33,410 37,375 42,345 47,290 53,238 55,230 57,229 60,220 66,227 72,229 76,220 79,209 83,205 92,209 94,222 99,260 103,318 109,370 113,420 119,465 123,478 127,503 131,521 134,515 138,493 141,450 145,385 150,320 154,270 158,222 163,188 167,187 171,170 175,162 179,177 183,193 185,183 188,195 191,228 195,260 199,315 201,340 205,370 209,410 213,452 218,463 222,490 226,510 229,514 233,505 236,495 240,478 242,450 247,390 251,300 254,210 258,168 261,157 265,158 269,138 273,168 276,176 280,180 284,205 288,250 291,285 296,302 299,322 301,332 304,322 308,285 313,235 316,210 319,190 323,172 327,152 331,150 334,152 336,165 339,200 345,240 349,320 354,410 359,475 362,500 368,505 371,500 375,487 378,487 380,478 381,483 383,478 385,483 388,463 392,435 397,390 400,350 405,310 409,245 414,210 418,178 424,181 428,163';
const macdYellow = '0,395 4,415 8,440 13,462 17,483 22,498 28,506 34,504 40,487 47,465 53,435 60,392 68,352 77,312 85,275 94,225 101,202 106,195 112,197 117,212 123,240 131,300 137,350 144,388 148,400 153,406 160,401 168,380 175,350 184,308 190,275 197,263 206,262 213,273 220,292 227,320 235,353 239,371 245,395 251,402 259,385 267,368 276,338 285,303 294,278 302,272 310,250 319,210 328,160 334,137 339,127 345,132 351,155 357,205 363,270 371,352 378,415 386,455 392,473 398,479 405,466 412,435 420,395 428,355';

// first bar of each trading day
const days = [];
for (let i = 0; i < 18; i++) days.push(4 + i * 18);
for (let i = 0; i < 6; i++) days.push(327 + i * 18);
const dayNames = ['9:30', '10/24', '10/25', '10/28', '10/29', '10/30', '10/31', '11/01', '11/04', '11/05', '11/06', '11/07',
    '11/08', '11/11', '11/12', '11/13', '11/14', '11/15', '11/18', '11/19', '11/20', '11/21', '11/22', '11/25', '11/26'];

const barX = i => 1.5 + i * 4;

function add(parent, tag, attrs, text) {
    const el = document.createElementNS(NS, tag);
    for (const key in attrs) el.setAttribute(key, attrs[key]);
    if (text !== undefined) el.textContent = text;
    parent.appendChild(el);
    return el;
}

function parse(points) {
    return points.split(' ').map(p => p.split(',').map(Number));
}

// one value for every bar between the first and last point
function sample(points, smooth) {
    const p = parse(points);
    const out = [];
    for (let k = 0; k < p.length - 1; k++) {
        const [x0, y0] = p[k];
        const [x1, y1] = p[k + 1];
        const before = p[k - 1] || p[k];
        const after = p[k + 2] || p[k + 1];
        const m0 = (y1 - before[1]) / (x1 - before[0]) * (x1 - x0);
        const m1 = (after[1] - y0) / (after[0] - x0) * (x1 - x0);
        for (let x = x0; x < x1; x++) {
            const t = (x - x0) / (x1 - x0);
            let y = y0 + (y1 - y0) * t;
            if (smooth) {
                const t2 = t * t, t3 = t2 * t;
                y = (2 * t3 - 3 * t2 + 1) * y0 + (t3 - 2 * t2 + t) * m0 + (3 * t2 - 2 * t3) * y1 + (t3 - t2) * m1;
            }
            out.push([x, y]);
        }
    }
    out.push(p[p.length - 1]);
    return out;
}

function Panel(id, offset) {
    const svg = document.getElementById(id);
    const toY = v => v / 3 - offset;

    return {
        svg,
        toY,
        line(data, color, dash) {
            const pts = data.map(([i, v]) => `${barX(i)},${toY(v).toFixed(1)}`).join(' ');
            add(svg, 'polyline', { points: pts, class: 'line', stroke: color, 'stroke-dasharray': dash || 'none' });
        },
        level(v, color, dash, end) {
            const y = Math.floor(toY(v)) + 0.5;
            add(svg, 'line', { x1: 1, x2: end || barX(BARS - 1), y1: y, y2: y, stroke: color, 'stroke-dasharray': dash || 'none' });
        },
        vertical(bar, from, to, color, dash) {
            add(svg, 'line', { x1: barX(bar), x2: barX(bar), y1: toY(from), y2: toY(to), stroke: color, 'stroke-dasharray': dash || 'none' });
        },
        grid(from, to) {
            days.forEach(d => add(svg, 'line', { x1: barX(d), x2: barX(d), y1: toY(from), y2: toY(to), class: 'grid-line' }));
        },
        bars(data, zero, color) {
            const d = data.map(([i, v]) => `M${barX(i)} ${toY(zero)}V${toY(v).toFixed(1)}`).join('');
            add(svg, 'path', { d, class: 'line', stroke: color });
        },
        dots(data, color, w, h) {
            const d = data.map(([i, v]) => `M${Math.floor(barX(i) - w / 2)} ${Math.round(toY(v) - h / 2)}h${w}v${h}h-${w}z`).join('');
            add(svg, 'path', { d, fill: color });
        },
        arrow(bar, v, dir, color) {
            const x = barX(bar), y = toY(v);
            add(svg, 'path', { d: `M${x} ${y}l6 ${-6 * dir}h-4v${-13 * dir}h-4v${13 * dir}h-4z`, fill: color });
        },
        blob(bar, v, color) {
            add(svg, 'circle', { cx: barX(bar), cy: toY(v), r: 4, fill: color });
        }
    };
}

const indexed = values => values.map((v, i) => [i, v]);

function Scale(id, offset) {
    const svg = document.getElementById(id);
    const toY = v => v / 3 - offset;
    return {
        ticks(list) {
            list.forEach(v => add(svg, 'line', { x1: 0, x2: 6, y1: Math.floor(toY(v)) + 0.5, y2: Math.floor(toY(v)) + 0.5, stroke: '#fff' }));
        },
        label(v, text) {
            add(svg, 'text', { x: 7, y: Math.round(toY(v)) + 7, class: 'axis-text' }, text);
        },
        tag(top, text, color) {
            const y = Math.round(toY(top));
            add(svg, 'rect', { x: 0, y, width: '100%', height: 23, fill: color });
            add(svg, 'text', { x: 8, y: y + 19, class: 'axis-text dark' }, text);
        }
    };
}

// price
const price = Panel('price', 0);
price.grid(-3, 1026);
price.level(433, '#008080', '3 3', '100%');
price.level(976, '#008080', '3 3', '100%');
price.line(parse(donchianHigh), '#008080');
price.line(parse(donchianLow), '#008080');
price.line(indexed(close), '#6666ff');
stopsRed.forEach(s => price.dots(sample(s, true), '#ff0000', 3, 3));
stopsGreen.forEach(s => price.dots(sample(s, true), '#00ff00', 3, 3));
price.dots(indexed(close), '#00ffff', 3, 4);
[[78, 60], [184, 245], [253, 452], [312, 425]].forEach(([b, v]) => price.arrow(b, v, 1, '#ff0000'));
[[128, 519], [199, 666], [275, 840], [383, 962]].forEach(([b, v]) => price.arrow(b, v, -1, '#ffff00'));
add(price.svg, 'text', { x: '100%', dx: -2, y: 140, 'text-anchor': 'end', class: 'axis-text teal' }, '34185');
add(price.svg, 'text', { x: '100%', dx: -2, y: 321, 'text-anchor': 'end', class: 'axis-text teal' }, '32915');

const priceScale = Scale('priceScale', -20);
priceScale.ticks([-5, 82, 169, 253, 340, 425, 511, 598, 769]);
[[82, '35000'], [253, '34600'], [425, '34200'], [598, '33800'], [772, '33400'], [938, '33000']].forEach(([v, t]) => priceScale.label(v, t));
priceScale.tag(651, '33605', '#008080');
priceScale.tag(690, '33515', '#6666ff');
priceScale.tag(798, '33264', '#00ff00');
priceScale.tag(933, '32950', '#008080');

// leo chart
const leoPanel = Panel('leo', 22);
leoPanel.grid(72, 531);
leoPanel.level(79, '#ff0000');
leoPanel.level(187, '#6e6e00');
leoPanel.level(277, '#a0a0a0', '3 3');
leoPanel.level(292, '#0000ff', '4 4');
leoPanel.level(400, '#6e6e00');
leoPanel.level(508, '#ff0000');
leoPanel.vertical(34, 63, 533, '#505050');
leoPanel.vertical(216, 63, 533, '#008080', '4 3');
leoPanel.vertical(307, 63, 533, '#808000', '3 3');
leoPanel.vertical(398, 63, 533, '#808000', '3 3');
leoPanel.line(sample(leoYellow, true), '#ffff00');
leoPanel.line(sample(leoRed, true), '#ff0000');
leoPanel.line(indexed(leo), '#00ffff');
leoPanel.vertical(125, 63, 533, '#a0d8ff');

const leoScale = Scale('leoScale', 3);
leoScale.ticks([133, 346, 454]);
leoScale.label(135, '6.00');
leoScale.label(348, '-2.00');
leoScale.label(456, '-6.00');
leoScale.tag(51, '8.00', '#ff0000');
leoScale.tag(159, '4.00', '#666600');
leoScale.tag(264, '0.00', '#0000ff');
leoScale.tag(228, '1.43', '#00ffff');
leoScale.tag(372, '-4.00', '#666600');
leoScale.tag(480, '-8.00', '#ff0000');

// cci
const cciPanel = Panel('cci', 199);
const cciData = sample(cci, false);
cciPanel.grid(594, 1072);
cciPanel.bars(cciData, 828, '#404040');
cciPanel.level(667, '#808080');
cciPanel.level(991, '#808080');
cciPanel.line(parse(stoch), '#cc6600', '3 4');
cciPanel.line(cciData, '#a0a0a0');
for (let i = 1; i < cciData.length; i++) {
    const v = cciData[i][1];
    if (v < 667) cciPanel.line([cciData[i - 1], cciData[i]], '#ff0000');
    if (v > 991) cciPanel.line([cciData[i - 1], cciData[i]], '#00ffff');
}
[[57, 609], [95, 615], [177, 611], [264, 609], [272, 615], [336, 611], [422, 615]].forEach(([b, v]) => cciPanel.blob(b, v, '#00ffff'));
[[22, 1058], [137, 1055], [239, 1056], [373, 1058]].forEach(([b, v]) => cciPanel.blob(b, v, '#ff0000'));

const cciScale = Scale('cciScale', 180);
cciScale.ticks([628, 829, 898, 1033]);
cciScale.label(829, '0.00');
cciScale.label(964, '-100.00');
cciScale.tag(639, '120.00', '#808080');
cciScale.tag(705, '70.47', '#a0a0a0');
cciScale.tag(963, '-120.00', '#808080');

// macd
const macdPanel = Panel('macd', 29);
macdPanel.grid(84, 560);
macdPanel.bars(sample(macdHist, true), 310, '#383838');
macdPanel.level(310, '#999900', '2 1');
macdPanel.line(sample(macdYellow, true), '#ffff00');
macdPanel.line(sample(macdRed, false), '#ff0000');

const macdScale = Scale('macdScale', 10);
macdScale.ticks([247, 430, 491]);
macdScale.label(248, '100.00');
macdScale.label(491, '-300.00');
macdScale.tag(87, '317.41', '#333333');
macdScale.tag(136, '241.41', '#ff0000');
macdScale.tag(282, '0.00', '#999900');
macdScale.tag(327, '-76.00', '#ffff00');

// time axis
const axis = document.getElementById('timeAxis');
dayNames.forEach((name, i) => {
    const bar = days[i] !== undefined ? days[i] : days[days.length - 1] + 18;
    add(axis, 'text', { x: barX(bar) + (i ? 1 : 5), y: 23, class: 'axis-text' }, name);
});
for (let x = 17.5; x < 1600; x += 68) {
    if (x < 300 || x > 960) add(axis, 'line', { x1: x, x2: x, y1: 0, y2: 4, stroke: '#fff' });
}
add(axis, 'line', { x1: 1785.5, x2: 1785.5, y1: 0, y2: 4, stroke: '#fff' });
[22, 345].forEach(bar => add(axis, 'line', { x1: barX(bar), x2: barX(bar), y1: 0, y2: 10, stroke: '#fff' }));
```
